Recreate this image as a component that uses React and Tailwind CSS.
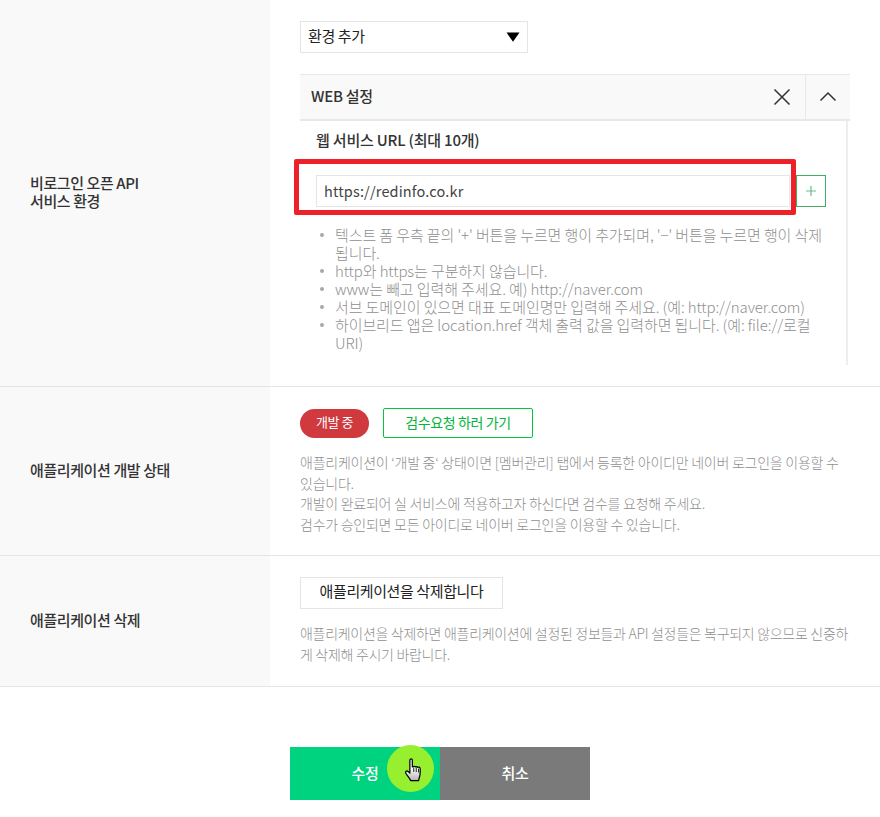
import React from "react";

const font = { fontFamily: '"Noto Sans CJK KR", "Noto Sans", sans-serif' };

function Row({ label, children, className }) {
  return (
    <div className={`flex border-b border-[#e5e5e5] ${className}`}>
      <div className="w-[270px] shrink-0 bg-[#f9f9f9] pl-[30px] pb-[3px] flex flex-col justify-center text-[15px] leading-[18px] font-medium text-[#333]">
        {label}
      </div>
      <div className="flex-1 min-w-0 pl-[30px] pr-[30px]">{children}</div>
    </div>
  );
}

export default function App() {
  return (
    <div className="w-[880px] h-[817px] bg-white overflow-hidden tracking-[-0.4px]" style={font}>
      <Row label={<><div>비로그인 오픈 API</div><div>서비스 환경</div></>} className="h-[387px]">
        <div className="pt-[21px]">
          <div className="w-[228px] h-[32px] border border-[#e5e5e5] flex items-center justify-between pl-[7px] pr-[6px] text-[15px] text-[#222]">
            <span className="-mt-[2px]">환경 추가</span>
            <svg width="14" height="10" viewBox="0 0 14 10" className="mr-[1px]"><path d="M0.5 0.5h13L7 9.8z" fill="#000" /></svg>
          </div>
          <div className="mt-[21px] w-[550px]">
            <div className="h-[47px] bg-[#f9f9f9] border-t border-b-2 border-[#e8e8e8] flex items-center justify-between">
              <span className="pl-[11px] -mt-[2px] text-[15px] font-medium text-[#333] tracking-[-0.25px]">WEB 설정</span>
              <div className="flex h-full items-center">
                <svg width="18" height="18" viewBox="0 0 18 18" className="mr-[14px]"><path d="M1.5 1.5l15 15M16.5 1.5l-15 15" stroke="#333" strokeWidth="1.5" fill="none" /></svg>
                <div className="w-[45px] h-full border-l border-[#e8e8e8] flex items-center justify-center">
                  <svg width="18" height="12" viewBox="0 0 18 12"><path d="M1.5 9.5l7.5-7.5 7.5 7.5" stroke="#333" strokeWidth="1.5" fill="none" /></svg>
                </div>
              </div>
            </div>
            <div className="relative mr-[2px] border-r-2 border-[#eeeeee] pl-[16px] pr-[20px] h-[244px]">
              <div className="pt-[8px] text-[15px] leading-[22px] font-medium text-[#333] tracking-[-0.2px]">웹 서비스 URL (최대 10개)</div>
              <div className="mt-[24px] flex items-center">
                <div className="w-[474px] h-[32px] border border-[#e5e5e5] flex items-center pl-[7px] text-[14.5px] text-[#444] tracking-[0.15px]">https://redinfo.co.kr</div>
                <div className="ml-[6px] w-[30px] h-[32px] border border-[#3fae62] flex items-center justify-center">
                  <svg width="12" height="12" viewBox="0 0 12 12"><path d="M6 1v10M1 6h10" stroke="#6cb98a" strokeWidth="1.2" /></svg>
                </div>
              </div>
              <ul className="mt-[19px] pl-[4px] pr-0 text-[15px] leading-[18px] text-[#8f8f8f] font-light list-none tracking-[-0.1px]">
                {[
                  "텍스트 폼 우측 끝의 '+' 버튼을 누르면 행이 추가되며, '−' 버튼을 누르면 행이 삭제 됩니다.",
                  "http와 https는 구분하지 않습니다.",
                  "www는 빼고 입력해 주세요. 예) http://naver.com",
                  "서브 도메인이 있으면 대표 도메인명만 입력해 주세요. (예: http://naver.com)",
                  "하이브리드 앱은 location.href 객체 출력 값을 입력하면 됩니다. (예: file://로컬 URI)",
                ].map((t) => (
                  <li key={t} className="relative pl-[15px]">
                    <span className="absolute left-0 top-[7px] w-[4px] h-[4px] rounded-full bg-[#a8a8a8]" />
                    {t}
                  </li>
                ))}
              </ul>
            </div>
          </div>
        </div>
      </Row>

      <Row label="애플리케이션 개발 상태" className="h-[169px]">
        <div className="pt-[21px] flex items-center gap-[14px]">
          <div className="w-[69px] h-[29px] pb-[2px] rounded-full bg-[#d0393e] text-white text-[13px] flex items-center justify-center">개발 중</div>
          <div className="w-[150px] h-[30px] pb-[2px] rounded-[2px] border border-[#00c73c] text-[#00b53a] text-[14px] flex items-center justify-center">검수요청 하러 가기</div>
        </div>
        <div className="mt-[14px] text-[14px] leading-[20.5px] font-light text-[#8f8f8f] tracking-[-0.25px]">
          애플리케이션이 ‘개발 중‘ 상태이면 [멤버관리] 탭에서 등록한 아이디만 네이버 로그인을 이용할 수 있습니다.<br />
          개발이 완료되어 실 서비스에 적용하고자 하신다면 검수를 요청해 주세요.<br />
          검수가 승인되면 모든 아이디로 네이버 로그인을 이용할 수 있습니다.
        </div>
      </Row>

      <Row label="애플리케이션 삭제" className="h-[131px]">
        <div className="pt-[21px]">
          <div className="w-[203px] h-[32px] pb-[3px] border border-[#e5e5e5] text-[15px] text-[#222] flex items-center justify-center">애플리케이션을 삭제합니다</div>
        </div>
        <div className="mt-[14px] text-[14px] leading-[20.5px] font-light text-[#8f8f8f] tracking-[-0.3px]">
          애플리케이션을 삭제하면 애플리케이션에 설정된 정보들과 API 설정들은 복구되지 않으므로 신중하게 삭제해 주시기 바랍니다.
        </div>
      </Row>

      <div className="mt-[60px] flex justify-center">
        <div className="flex w-[300px] h-[53px] text-white text-[15px] font-medium">
          <div className="relative w-[150px] bg-[#00d37f] flex items-center justify-center">
            수정
            <div className="absolute left-[97px] top-[-2px] w-[47px] h-[47px] rounded-full bg-[#96ef2f] flex items-center justify-center">
              <svg width="19" height="24" viewBox="1 0.5 15.5 21.5" className="translate-x-[3px] translate-y-[1px]">
                <defs>
                  <linearGradient id="hand" x1="0" y1="0" x2="0" y2="1">
                    <stop offset="0.4" stopColor="#ffffff" />
                    <stop offset="1" stopColor="#b5b5b5" />
                  </linearGradient>
                </defs>
                <path d="M5.5 2.5c0-1.6 2.2-1.6 2.2 0v6l.6-.2c.6-.6 1.8-.5 2 .2.7-.6 1.9-.4 2.1.4.9-.6 2.2-.2 2.3 1 .2 2.8.1 5.8-.7 8l-.7 2.8H6.2c-.6-2-3-4.2-4.3-6.6-.7-1.4.7-2.6 2-1.6l1.6 1.6z" fill="url(#hand)" stroke="#000" strokeWidth="1.1" strokeLinejoin="round" />
                <path d="M9 9v4M11.2 9v4M13.3 10v3.5" stroke="#000" strokeWidth="0.8" fill="none" />
              </svg>
            </div>
          </div>
          <div className="w-[150px] bg-[#7a7a7a] flex items-center justify-center">취소</div>
        </div>
      </div>

      <div className="absolute left-[294px] top-[159px] w-[502px] h-[56px] border-[5px] border-[#ee2029] rounded-[2px] pointer-events-none" />
    </div>
  );
}
